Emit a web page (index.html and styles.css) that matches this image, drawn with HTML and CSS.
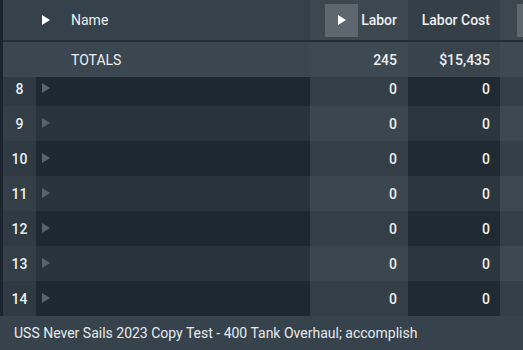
FILE: index.html
```html
<!DOCTYPE html>
<html>
<head>
    <title>Labor Grid</title>
    <link rel="stylesheet" href="styles.css">
</head>
<body>
    <div class="grid">
        <div class="row head">
            <div class="cell num"></div>
            <div class="cell name"><span class="tri"></span><span class="label">Name</span></div>
            <div class="cell labor"><span class="btn"><span class="tri"></span></span><span class="label strong">Labor</span></div>
            <div class="cell cost"><span class="label strong">Labor Cost</span></div>
            <div class="cell extra"><span class="btn"></span></div>
        </div>
        <div class="row totals">
            <div class="cell num"></div>
            <div class="cell name"><span class="label">TOTALS</span></div>
            <div class="cell labor strong">245</div>
            <div class="cell cost strong">$15,435</div>
            <div class="cell extra"></div>
        </div>
        <div class="rows">
            <div class="scroll">
                <div class="row data">
                    <div class="cell num">8</div>
                    <div class="cell name"><span class="tri dim"></span></div>
                    <div class="cell labor">0</div>
                    <div class="cell cost">0</div>
                    <div class="cell extra"></div>
                </div>
                <div class="row data">
                    <div class="cell num">9</div>
                    <div class="cell name"><span class="tri dim"></span></div>
                    <div class="cell labor">0</div>
                    <div class="cell cost">0</div>
                    <div class="cell extra"></div>
                </div>
                <div class="row data">
                    <div class="cell num">10</div>
                    <div class="cell name"><span class="tri dim"></span></div>
                    <div class="cell labor">0</div>
                    <div class="cell cost">0</div>
                    <div class="cell extra"></div>
                </div>
                <div class="row data">
                    <div class="cell num">11</div>
                    <div class="cell name"><span class="tri dim"></span></div>
                    <div class="cell labor">0</div>
                    <div class="cell cost">0</div>
                    <div class="cell extra"></div>
                </div>
                <div class="row data">
                    <div class="cell num">12</div>
                    <div class="cell name"><span class="tri dim"></span></div>
                    <div class="cell labor">0</div>
                    <div class="cell cost">0</div>
                    <div class="cell extra"></div>
                </div>
                <div class="row data">
                    <div class="cell num">13</div>
                    <div class="cell name"><span class="tri dim"></span></div>
                    <div class="cell labor">0</div>
                    <div class="cell cost">0</div>
                    <div class="cell extra"></div>
                </div>
                <div class="row data">
                    <div class="cell num">14</div>
                    <div class="cell name"><span class="tri dim"></span></div>
                    <div class="cell labor">0</div>
                    <div class="cell cost">0</div>
                    <div class="cell extra"></div>
                </div>
            </div>
        </div>
    </div>
    <div class="footer">USS Never Sails 2023 Copy Test - 400 Tank Overhaul; accomplish</div>
</body>
</html>
```

FILE: styles.css
```css
body {
    margin: 0;
    width: 523px;
    height: 350px;
    overflow: hidden;
    font-family: Roboto, "Liberation Sans", sans-serif;
    font-size: 14px;
    color: #eef0f1;
    background: #1b252d;
}

.grid {
    padding-left: 3px;
    height: 316px;
    overflow: hidden;
}

.row {
    display: grid;
    grid-template-columns: 33px 274px 98px 92px 40px;
    height: 35px;
}

.cell {
    display: flex;
    align-items: center;
}

.num {
    justify-content: center;
    font-weight: 500;
}

.name {
    padding-left: 6px;
}

.labor, .cost {
    justify-content: flex-end;
    padding-right: 11px;
    font-weight: 500;
}

.cost {
    padding-right: 10px;
}

.strong {
    font-weight: 500;
}

.label {
    font-weight: 400;
}

.label.strong {
    font-weight: 500;
}

.name .label {
    margin-left: 21px;
}

.totals .name .label {
    margin-left: 29px;
}

.tri {
    width: 0;
    height: 0;
    border-top: 5px solid transparent;
    border-bottom: 5px solid transparent;
    border-left: 8px solid #ffffff;
}

.tri.dim {
    border-top-width: 5px;
    border-bottom-width: 5px;
    border-left: 8px solid #59636b;
    margin-top: -1px;
}

/* header */
.head {
    height: 40px;
    border-bottom: 2px solid #232d35;
}

.head .num, .head .name { background: #36424b; }
.head .labor { background: #3c4750; padding-right: 11px; }
.head .cost { background: #343f48; }
.head .extra { background: #3c4750; }

.btn {
    display: flex;
    align-items: center;
    justify-content: center;
    width: 33px;
    height: 33px;
    background: #5e676e;
    margin-right: 4px;
    flex-shrink: 0;
}

.head .labor .btn {
    margin-left: 15px;
    margin-right: auto;
}

.head .extra .btn {
    margin-left: 17px;
}

/* totals */
.totals .num, .totals .name { background: #3a4650; }
.totals .labor { background: #3e4a53; }
.totals .cost { background: #38434c; }
.totals .extra { background: #3e4a53; }

/* data rows */
.rows {
    height: 239px;
    overflow: hidden;
}

.scroll {
    margin-top: -6px;
}

.data .num { background: #2f3a43; }
.data .name { background: #1e2830; }
.data .labor { background: #333e47; }
.data .cost { background: #1f2a33; }
.data .extra { background: #343f48; }

.data:nth-child(even) .num { background: #333e47; }
.data:nth-child(even) .name { background: #29333b; }
.data:nth-child(even) .labor { background: #3b464f; }
.data:nth-child(even) .cost { background: #2c363f; }
.data:nth-child(even) .extra { background: #3d4851; }

.footer {
    height: 34px;
    display: flex;
    align-items: center;
    padding-left: 14px;
    background: #37434c;
    color: #e8eaec;
}
```
